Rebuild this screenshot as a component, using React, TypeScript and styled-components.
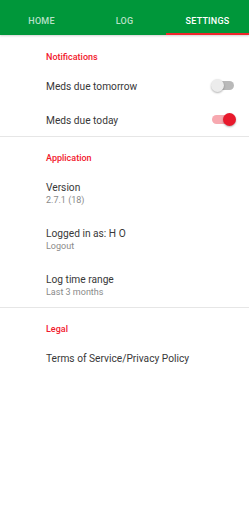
import styled, { createGlobalStyle } from "styled-components";

const GlobalStyle = createGlobalStyle`
  html, body {
    margin: 0;
    padding: 0;
    background: #ffffff;
    font-family: Roboto, "Noto Sans", Arial, sans-serif;
  }
`;

const App = () => {
  return (
    <>
      <GlobalStyle />
      <Page>
        <TabBar>
          <Tab>HOME</Tab>
          <Tab>LOG</Tab>
          <Tab active>SETTINGS</Tab>
        </TabBar>
        <Section first>
          <SectionTitle>Notifications</SectionTitle>
          <Row>
            <ItemTitle>Meds due tomorrow</ItemTitle>
            <Switch />
          </Row>
          <Row>
            <ItemTitle>Meds due today</ItemTitle>
            <Switch on />
          </Row>
        </Section>
        <Section>
          <SectionTitle>Application</SectionTitle>
          <Item>
            <ItemTitle>Version</ItemTitle>
            <ItemSub>2.7.1 (18)</ItemSub>
          </Item>
          <Item>
            <ItemTitle>Logged in as: H O</ItemTitle>
            <ItemSub>Logout</ItemSub>
          </Item>
          <Item>
            <ItemTitle>Log time range</ItemTitle>
            <ItemSub>Last 3 months</ItemSub>
          </Item>
        </Section>
        <Section last>
          <SectionTitle>Legal</SectionTitle>
          <Row>
            <ItemTitle>Terms of Service/Privacy Policy</ItemTitle>
          </Row>
        </Section>
      </Page>
    </>
  );
};

const Page = styled.div`
  width: 249px;
  min-height: 512px;
  background: #fff;
`;

const TabBar = styled.div`
  display: grid;
  grid-template-columns: repeat(3, 1fr);
  height: 35px;
  background: #00973a;
  box-shadow: 0 1px 2px rgba(0, 0, 0, 0.18);
`;

const Tab = styled.div<{ active?: boolean }>`
  display: flex;
  align-items: center;
  justify-content: center;
  box-sizing: border-box;
  padding-top: 8px;
  font-size: 9px;
  font-weight: 500;
  letter-spacing: 0.2px;
  color: ${(p) => (p.active ? "#ffffff" : "rgba(255, 255, 255, 0.72)")};
  border-bottom: 2px solid ${(p) => (p.active ? "#f0262c" : "transparent")};
`;

const Section = styled.div<{ first?: boolean; last?: boolean }>`
  padding-top: ${(p) => (p.first ? "16px" : "15px")};
  border-bottom: ${(p) => (p.last ? "none" : "1px solid #e6e6e6")};
`;

const SectionTitle = styled.div`
  padding-left: 46px;
  font-size: 9px;
  font-weight: 500;
  color: #f2182c;
  line-height: 12px;
  margin-bottom: 5px;
`;

const Row = styled.div`
  display: flex;
  align-items: center;
  justify-content: space-between;
  box-sizing: border-box;
  height: 34px;
  padding: 2px 15px 0 46px;
`;

const Item = styled.div`
  display: flex;
  flex-direction: column;
  justify-content: center;
  box-sizing: border-box;
  height: 46px;
  padding: 3px 0 0 46px;
`;

const ItemTitle = styled.div`
  font-size: 10.2px;
  color: #383838;
  line-height: 13px;
`;

const ItemSub = styled.div`
  font-size: 9px;
  color: #8a8a8a;
  line-height: 12px;
`;

const Switch = styled.div<{ on?: boolean }>`
  position: relative;
  width: 22px;
  height: 9px;
  margin-top: -2px;
  border-radius: 5px;
  background: ${(p) => (p.on ? "#f7a9b0" : "#b9b9b9")};

  &::after {
    content: "";
    position: absolute;
    top: -2px;
    left: ${(p) => (p.on ? "11px" : "-1px")};
    width: 13px;
    height: 13px;
    border-radius: 50%;
    background: ${(p) => (p.on ? "#e8192c" : "#ececec")};
    box-shadow: 0 1px 2px rgba(0, 0, 0, 0.3);
  }
`;

export default App;
